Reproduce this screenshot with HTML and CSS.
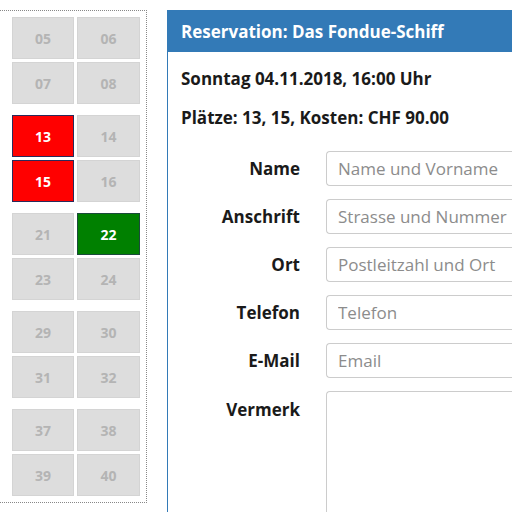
FILE: index.html
```html
<!DOCTYPE html>
<html lang="de">
<head>
    <meta charset="UTF-8">
    <title>Reservation</title>
    <link rel="stylesheet" href="styles.css">
</head>
<body>
    <div class="page">
        <div class="hall">
            <div class="group">
                <div class="seat">05</div>
                <div class="seat">06</div>
                <div class="seat">07</div>
                <div class="seat">08</div>
            </div>
            <div class="group">
                <div class="seat selected">13</div>
                <div class="seat">14</div>
                <div class="seat selected">15</div>
                <div class="seat">16</div>
            </div>
            <div class="group">
                <div class="seat">21</div>
                <div class="seat booked">22</div>
                <div class="seat">23</div>
                <div class="seat">24</div>
            </div>
            <div class="group">
                <div class="seat">29</div>
                <div class="seat">30</div>
                <div class="seat">31</div>
                <div class="seat">32</div>
            </div>
            <div class="group">
                <div class="seat">37</div>
                <div class="seat">38</div>
                <div class="seat">39</div>
                <div class="seat">40</div>
            </div>
        </div>

        <div class="panel">
            <div class="panel-heading">Reservation: Das Fondue-Schiff</div>
            <div class="panel-body">
                <p class="info">Sonntag 04.11.2018, 16:00 Uhr</p>
                <p class="info">Plätze: 13, 15, Kosten: CHF 90.00</p>
                <form class="form">
                    <label for="name">Name</label>
                    <input id="name" type="text" placeholder="Name und Vorname">
                    <label for="street">Anschrift</label>
                    <input id="street" type="text" placeholder="Strasse und Nummer">
                    <label for="city">Ort</label>
                    <input id="city" type="text" placeholder="Postleitzahl und Ort">
                    <label for="phone">Telefon</label>
                    <input id="phone" type="text" placeholder="Telefon">
                    <label for="mail">E-Mail</label>
                    <input id="mail" type="text" placeholder="Email">
                    <label for="note" class="top">Vermerk</label>
                    <textarea id="note"></textarea>
                </form>
            </div>
        </div>
    </div>
</body>
</html>
```

FILE: styles.css
```css
body {
    margin: 0;
    font-family: 'Open Sans', sans-serif;
    color: #1a1a1a;
    background: #fff;
    overflow: hidden;
}

.page {
    display: flex;
    align-items: flex-start;
    gap: 20px;
    padding-top: 10px;
    margin-left: -1px;
}

.hall {
    display: flex;
    flex-direction: column;
    gap: 11px;
    padding: 6px 6px 6px 12px;
    border: 1px dotted #888;
}

.group {
    display: grid;
    grid-template-columns: 62px 63px;
    grid-auto-rows: 42px;
    gap: 3px;
}

.seat {
    display: flex;
    align-items: center;
    justify-content: center;
    background: #dddddd;
    border: 1px solid #d4d4d4;
    color: #b4b4b4;
    font-weight: bold;
    font-size: 14px;
}

.seat.selected {
    background: #ff0000;
    border-color: #2a2a5a;
    color: #fff;
}

.seat.booked {
    background: #008000;
    border-color: #1a4a3a;
    color: #fff;
}

.panel {
    flex: 1;
    min-height: 520px;
    border: 1px solid #337ab7;
    border-right: none;
}

.panel-heading {
    background: #337ab7;
    color: #fff;
    font-weight: bold;
    font-size: 17px;
    line-height: 22px;
    padding: 10px 13px 9px;
}

.panel-body {
    padding: 16px 0 0 13px;
}

.info {
    margin: 0 0 17px;
    font-weight: bold;
    font-size: 17px;
    line-height: 22px;
}

.form {
    display: grid;
    grid-template-columns: 119px 1fr;
    column-gap: 26px;
    row-gap: 13px;
    margin-top: 22px;
}

.form label {
    text-align: right;
    font-weight: bold;
    font-size: 17px;
    line-height: 35px;
}

.form label.top {
    line-height: 22px;
    padding-top: 8px;
}

.form input,
.form textarea {
    box-sizing: border-box;
    height: 35px;
    border: 1px solid #ccc;
    border-right: none;
    border-radius: 4px 0 0 4px;
    padding: 0 11px;
    font-family: 'Open Sans', sans-serif;
    font-size: 17px;
    color: #555;
}

.form textarea {
    height: 160px;
    resize: none;
}

.form input::placeholder {
    color: #8c8c8c;
}
```
